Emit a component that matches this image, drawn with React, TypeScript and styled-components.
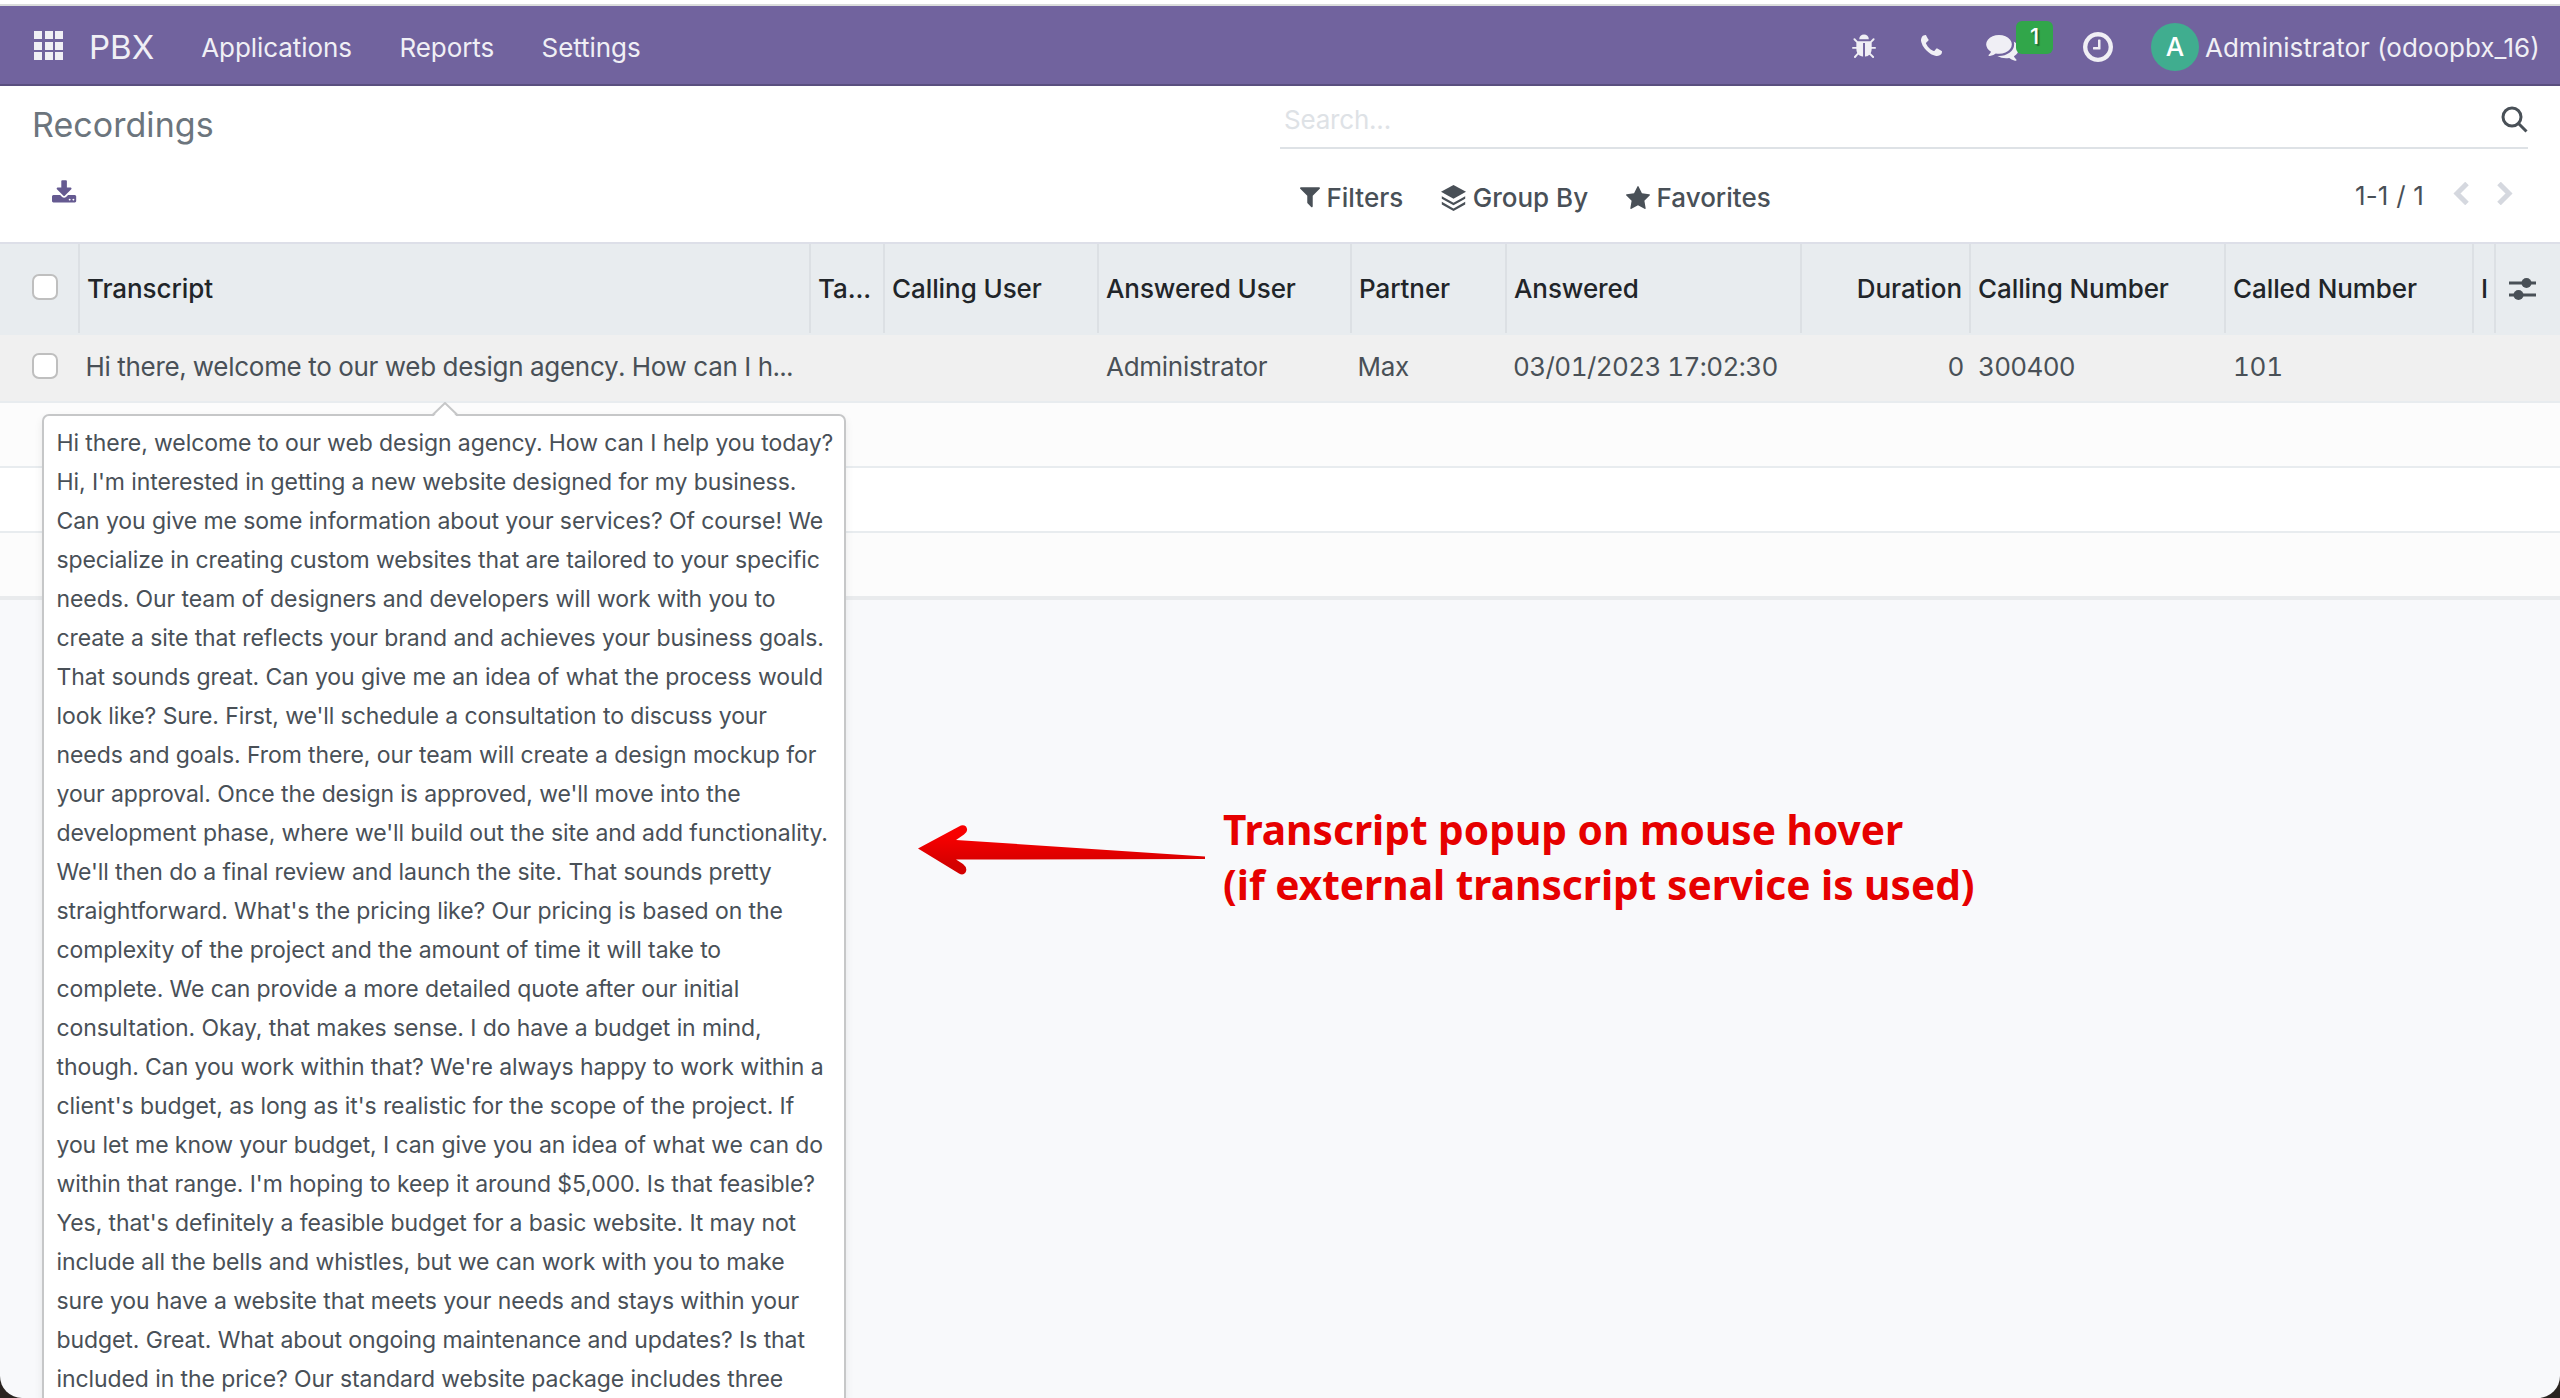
import React from 'react';
import styled, { createGlobalStyle } from 'styled-components';

const GlobalStyle = createGlobalStyle`
  * { box-sizing: border-box; }
  body {
    margin: 0;
    background: #2a2420;
    font-family: Inter, "Liberation Sans", sans-serif;
    font-size: 26px;
    color: #495057;
    -webkit-font-smoothing: antialiased;
  }
`;

const Window = styled.div`
  position: relative;
  display: flex;
  flex-direction: column;
  width: 2560px;
  height: 1398px;
  overflow: hidden;
  background: #f8f9fb;
  border-radius: 0 0 22px 22px;
`;

const WindowEdge = styled.div`
  flex: none;
  height: 6px;
  background: #fff;
  border-bottom: 2px solid #dadcdb;
`;

const Navbar = styled.nav`
  flex: none;
  display: flex;
  align-items: center;
  justify-content: space-between;
  height: 80px;
  padding: 1px 20px 0 34px;
  background: #71639e;
  border-bottom: 2px solid #5a4f7f;
  color: #f0eff5;
`;

const NavGroup = styled.div`
  display: flex;
  align-items: center;
`;

const AppsGrid = styled.span`
  display: grid;
  grid-template-columns: repeat(3, 8px);
  grid-auto-rows: 8px;
  gap: 2.5px;
  margin-right: 26px;

  i { background: #f0eff5; }
`;

const Brand = styled.span`
  font-size: 33px;
  line-height: 40px;
  margin: 2px 47px 0 0;
`;

const MenuItem = styled.a`
  margin: 3px 47.4px 0 0;
  letter-spacing: -0.06px;
`;

const Glyph = styled.svg<{ $w: number; $h: number; $gap?: number; $drop?: number }>`
  display: block;
  flex: none;
  width: ${p => p.$w}px;
  height: ${p => p.$h}px;
  margin-right: ${p => p.$gap ?? 0}px;
  margin-top: ${p => p.$drop ?? 0}px;
  overflow: visible;
  fill: currentColor;
`;

const Messages = styled.span`
  position: relative;
  margin: 5px 64px 0 0;
`;

const Badge = styled.span`
  position: absolute;
  left: 30px;
  top: -14px;
  width: 37px;
  height: 33px;
  border-radius: 6px;
  background: #31a64a;
  color: #fff;
  font-size: 22px;
  font-weight: 500;
  line-height: 31px;
  text-align: center;
  text-shadow: 2px 2px 1px rgba(0, 0, 0, 0.35);
`;

const Avatar = styled.span`
  width: 48px;
  height: 48px;
  margin: 2px 6px 0 0;
  border-radius: 50%;
  background: #40ad8f;
  color: #fff;
  font-size: 26px;
  font-weight: 500;
  line-height: 48px;
  text-align: center;
`;

const UserName = styled.span`
  width: 335px;
  margin-top: 3px;
  white-space: nowrap;
`;

const ControlPanel = styled.header`
  flex: none;
  display: grid;
  grid-template-columns: 1280px 1248px;
  grid-template-rows: 63px 93px;
  height: 158px;
  background: #fff;
  border-bottom: 2px solid #dddfe8;
`;

const Title = styled.h1`
  margin: 0;
  padding: 15px 0 0 32px;
  align-self: center;
  font-size: 34px;
  font-weight: 400;
  line-height: 40px;
  letter-spacing: 0.05px;
  color: #6c757d;
`;

const SearchBox = styled.div`
  display: flex;
  justify-content: space-between;
  padding: 19px 0 0 4px;
  border-bottom: 2px solid #dee2e6;
  line-height: 30px;
  color: #dee2e6;
  letter-spacing: -0.2px;
`;

const SearchGlyph = styled.svg`
  width: 27px;
  height: 27px;
  margin-top: 1px;
  fill: none;
  stroke: #495057;
  stroke-width: 3;
`;

const ExportButton = styled.div`
  padding: 31px 0 0 52px;
  color: #655a91;
`;

const SearchTools = styled.div`
  display: flex;
  align-items: center;
  justify-content: space-between;
  padding-left: 20px;
`;

const Menus = styled.div`
  display: flex;
  gap: 38px;
  font-weight: 500;
  padding-top: 4px;
`;

const MenuButton = styled.span`
  display: flex;
  align-items: center;
  gap: 6.5px;
  line-height: 30px;
`;

const Pager = styled.div`
  display: flex;
  align-items: center;
  padding-right: 15px;
  color: #495057;
  letter-spacing: 0.2px;
`;

const PagerArrow = styled.svg`
  width: 16px;
  height: 23px;
  margin: 0 0 5px 29px;
  fill: none;
  stroke: #d5d8df;
  stroke-width: 5;
  &:last-child { margin-left: 28px; }
`;

const columns = '80px 731px 74px 214px 253px 155px 295px 169px 255px 248px 22px 64px';

const HeaderRow = styled.div`
  flex: none;
  display: grid;
  grid-template-columns: ${columns};
  height: 91px;
  padding-bottom: 0;
  background: #e8ecef;
  border-bottom: 2px solid #e8ecef;
`;

const HeaderCell = styled.div<{ $end?: boolean }>`
  display: flex;
  align-items: center;
  justify-content: ${p => (p.$end ? 'flex-end' : 'flex-start')};
  padding: 0 ${p => (p.$end ? 7 : 0)}px 0 7px;
  border-right: 2px solid #dce0e4;
  overflow: hidden;
  white-space: nowrap;
  font-weight: 500;
  letter-spacing: -0.08px;
  color: #212529;
  &:last-child { border-right: 0; padding-left: 13px; color: #495057; }
`;

const DataRow = styled.div`
  flex: none;
  display: grid;
  grid-template-columns: ${columns};
  height: 68px;
  padding-bottom: 4px;
  background: #f0f0f0;
  border-bottom: 2px solid #e8ecef;
`;

const Cell = styled.div<{ $end?: boolean; $inset?: number; $tracking?: number }>`
  display: flex;
  align-items: center;
  justify-content: ${p => (p.$end ? 'flex-end' : 'flex-start')};
  padding: 0 7px 0 ${p => p.$inset ?? 7}px;
  white-space: nowrap;
  font-variant-numeric: tabular-nums;
  letter-spacing: ${p => p.$tracking ?? -0.28}px;
`;

const Checkbox = styled.span`
  width: 26px;
  height: 26px;
  margin: 0 0 3px 25px;
  border: 2px solid #bfbfbf;
  border-radius: 7px;
  background: #fff;
  ${Cell} & { margin: 0 0 0 25px; }
`;

const EmptyRow = styled.div<{ $striped?: boolean; $last?: boolean }>`
  flex: none;
  height: ${p => (p.$last ? 67 : 65)}px;
  background: ${p => (p.$striped ? '#fcfcfc' : '#fff')};
  border-bottom: ${p => (p.$last ? '4px solid #e9ebed' : '2px solid #e8ecef')};
`;

const Popover = styled.div`
  position: absolute;
  left: 42px;
  top: 414px;
  width: 804px;
  padding: 7.5px 12.5px;
  border: 2px solid #c6c7c8;
  border-radius: 7px;
  background: #fff;
  box-shadow: 0 4px 8px rgba(0, 0, 0, 0.08);
  font-size: 23px;
  line-height: 39px;
  letter-spacing: -0.09px;
  white-space: pre;
`;

const PopoverArrow = styled.svg`
  position: absolute;
  left: 387px;
  top: -14px;
  width: 28px;
  height: 15px;
`;

const Annotation = styled.div`
  position: absolute;
  left: 918px;
  top: 802px;
  display: flex;
  gap: 17px;
  font: 700 40.65px/55px "Noto Sans", "Open Sans", sans-serif;
  color: #e60000;
  white-space: pre;
`;

const AnnotationArrow = styled.svg`
  width: 288px;
  height: 52px;
  margin-top: 22px;
`;

const icons = {
  bug: 'M1632 960q0 26-19 45t-45 19h-224q0 171-67 290l208 209q19 19 19 45t-19 45q-18 19-45 19t-45-19l-198-197q-5 5-15 13t-42 28.5-65 36.5-82 29-97 13v-896h-128v896q-51 0-101.5-13.5t-87-33-66-39-43.5-32.5l-15-14-183 207q-20 21-48 21-24 0-43-16-19-18-20.5-44.5t15.5-46.5l202-227q-58-114-58-274h-224q-26 0-45-19t-19-45 19-45 45-19h224v-294l-173-173q-19-19-19-45t19-45 45-19 45 19l173 173h844l173-173q19-19 45-19t45 19 19 45-19 45l-173 173v294h224q26 0 45 19t19 45zm-480-576h-640q0-133 93.5-226.5t226.5-93.5 226.5 93.5 93.5 226.5z',
  phone: 'M1600 1240q0 27-10 70.5t-21 68.5q-21 50-122 106-94 51-186 51-27 0-53-3.5t-57.5-12.5-47-14.5-55.5-20.5-49-18q-98-35-175-83-127-79-264-216t-216-264q-48-77-83-175-3-9-18-49t-20.5-55.5-14.5-47-12.5-57.5-3.5-53q0-92 51-186 56-101 106-122 25-11 68.5-21t70.5-10q14 0 21 3 18 6 53 76 11 19 30 54t35 63.5 31 53.5q3 4 17.5 25t21.5 35.5 7 28.5q0 20-28.5 50t-62 55-62 53-28.5 46q0 9 5 22.5t8.5 20.5 14 24 11.5 19q76 137 174 235t235 174q2 1 19 11.5t24 14 20.5 8.5 22.5 5q18 0 46-28.5t53-62 55-62 50-28.5q14 0 28.5 7t35.5 21.5 25 17.5q25 15 53.5 31t63.5 35 54 30q70 35 76 53 3 7 3 21z',
  comments: 'M1408 768q0 139-94 257t-256.5 186.5-353.5 68.5q-86 0-176-16-124 88-278 128-36 9-86 16h-3q-11 0-20.5-8t-11.5-21q-1-3-1-6.5t.5-6.5 2-6l2.5-5 3.5-5.5 4-5 4.5-5 4-4.5q5-6 23-25t26-29.5 22.5-29 25-38.5 20.5-44q-124-72-195-177t-71-224q0-139 94-257t256.5-186.5 353.5-68.5 353.5 68.5 256.5 186.5 94 257zm384 256q0 120-71 224.5t-195 176.5q10 24 20.5 44t25 38.5 22.5 29 26 29.5 23 25q1 1 4 4.5t4.5 5 4 5 3.5 5.5l2.5 5 2 6 .5 6.5-1 6.5q-3 14-13 22t-22 7q-50-7-86-16-154-40-278-128-90 16-176 16-271 0-472-132 58 4 88 4 161 0 309-45t264-129q125-92 192-212t67-254q0-77-23-152 129 71 204 178t75 230z',
  clock: 'M1024 544v448q0 14-9 23t-23 9h-320q-14 0-23-9t-9-23v-64q0-14 9-23t23-9h224v-352q0-14 9-23t23-9h64q14 0 23 9t9 23zm416 352q0-148-73-273t-198-198-273-73-273 73-198 198-73 273 73 273 198 198 273 73 273-73 198-198 73-273zm224 0q0 209-103 385.5t-279.5 279.5-385.5 103-385.5-103-279.5-279.5-103-385.5 103-385.5 279.5-279.5 385.5-103 385.5 103 279.5 279.5 103 385.5z',
  download: 'M1344 1344q0-26-19-45t-45-19-45 19-19 45 19 45 45 19 45-19 19-45zm256 0q0-26-19-45t-45-19-45 19-19 45 19 45 45 19 45-19 19-45zm128-224v320q0 40-28 68t-68 28h-1472q-40 0-68-28t-28-68v-320q0-40 28-68t68-28h465l135 136q58 56 136 56t136-56l136-136h464q40 0 68 28t28 68zm-325-569q17 41-14 70l-448 448q-18 19-45 19t-45-19l-448-448q-31-29-14-70 17-39 59-39h256v-448q0-26 19-45t45-19h256q26 0 45 19t19 45v448h256q42 0 59 39z',
  filter: 'M1595 295q17 41-14 70l-493 493v742q0 42-39 59-13 5-25 5-27 0-45-19l-256-256q-19-19-19-45v-486l-493-493q-31-29-14-70 17-39 59-39h1280q42 0 59 39z',
  star: 'M1728 647q0 22-26 48l-363 354 86 500q1 7 1 20 0 21-10.5 35.5t-30.5 14.5q-19 0-40-12l-449-236-449 236q-22 12-40 12-21 0-31.5-14.5t-10.5-35.5q0-6 2-20l86-500-364-354q-25-27-25-48 0-37 56-46l502-73 225-455q19-41 49-41t49 41l225 455 502 73q56 9 56 46z',
};

const transcript = [
  'Hi there, welcome to our web design agency. How can I help you today?',
  "Hi, I'm interested in getting a new website designed for my business.",
  'Can you give me some information about your services? Of course! We',
  'specialize in creating custom websites that are tailored to your specific',
  'needs. Our team of designers and developers will work with you to',
  'create a site that reflects your brand and achieves your business goals.',
  'That sounds great. Can you give me an idea of what the process would',
  "look like? Sure. First, we'll schedule a consultation to discuss your",
  'needs and goals. From there, our team will create a design mockup for',
  "your approval. Once the design is approved, we'll move into the",
  "development phase, where we'll build out the site and add functionality.",
  "We'll then do a final review and launch the site. That sounds pretty",
  "straightforward. What's the pricing like? Our pricing is based on the",
  'complexity of the project and the amount of time it will take to',
  'complete. We can provide a more detailed quote after our initial',
  'consultation. Okay, that makes sense. I do have a budget in mind,',
  "though. Can you work within that? We're always happy to work within a",
  "client's budget, as long as it's realistic for the scope of the project. If",
  'you let me know your budget, I can give you an idea of what we can do',
  "within that range. I'm hoping to keep it around $5,000. Is that feasible?",
  "Yes, that's definitely a feasible budget for a basic website. It may not",
  'include all the bells and whistles, but we can work with you to make',
  'sure you have a website that meets your needs and stays within your',
  'budget. Great. What about ongoing maintenance and updates? Is that',
  'included in the price? Our standard website package includes three',
];

export default function App() {
  return (
    <>
      <GlobalStyle />
      <Window>
        <WindowEdge />
        <Navbar>
          <NavGroup>
            <AppsGrid>{Array.from({ length: 9 }, (_, i) => <i key={i} />)}</AppsGrid>
            <Brand>PBX</Brand>
            <MenuItem>Applications</MenuItem>
            <MenuItem>Reports</MenuItem>
            <MenuItem>Settings</MenuItem>
          </NavGroup>
          <NavGroup>
            <Glyph $w={23} $h={24} $gap={45} $drop={1} viewBox="96 64 1536 1540"><path d={icons.bug} /></Glyph>
            <Glyph $w={21} $h={21} $gap={44} viewBox="192 128 1408 1408"><path d={icons.phone} /></Glyph>
            <Messages>
              <Glyph $w={33} $h={27} viewBox="0 256 1792 1480"><path d={icons.comments} /></Glyph>
              <Badge>1</Badge>
            </Messages>
            <Glyph $w={30} $h={30} $gap={38} $drop={2} viewBox="128 128 1536 1536"><path d={icons.clock} /></Glyph>
            <Avatar>A</Avatar>
            <UserName>Administrator (odoopbx_16)</UserName>
          </NavGroup>
        </Navbar>

        <ControlPanel>
          <Title>Recordings</Title>
          <SearchBox>
            <span>Search...</span>
            <SearchGlyph viewBox="0 0 27 27">
              <circle cx="11" cy="11" r="9" />
              <path d="M17 17L25.5 25.5" />
            </SearchGlyph>
          </SearchBox>
          <ExportButton>
            <Glyph $w={24.2} $h={22.6} viewBox="64 0 1664 1536"><path d={icons.download} /></Glyph>
          </ExportButton>
          <SearchTools>
            <Menus>
              <MenuButton>
                <Glyph $w={20} $h={20.5} viewBox="192 256 1408 1408"><path d={icons.filter} /></Glyph>
                Filters
              </MenuButton>
              <MenuButton>
                <Glyph $w={25} $h={26} viewBox="0 0 25 26">
                  <path d="M12.5 0L25 6.8 12.5 13.8 0 6.8z" />
                  <path d="M.8 11.2L12.5 17.8 24.2 11.2V13.8L12.5 20.2 .8 13.8z" />
                  <path d="M.8 16.8L12.5 23.4 24.2 16.8V19.4L12.5 26 .8 19.4z" />
                </Glyph>
                Group By
              </MenuButton>
              <MenuButton>
                <Glyph $w={24} $h={23} viewBox="64 32 1664 1587"><path d={icons.star} /></Glyph>
                Favorites
              </MenuButton>
            </Menus>
            <Pager>
              <span>1-1 / 1</span>
              <PagerArrow viewBox="0 0 16 23"><path d="M14 1.5L4 11.5 14 21.5" /></PagerArrow>
              <PagerArrow viewBox="0 0 16 23"><path d="M2 1.5L12 11.5 2 21.5" /></PagerArrow>
            </Pager>
          </SearchTools>
        </ControlPanel>

        <HeaderRow>
          <HeaderCell><Checkbox /></HeaderCell>
          <HeaderCell>Transcript</HeaderCell>
          <HeaderCell>Ta...</HeaderCell>
          <HeaderCell>Calling User</HeaderCell>
          <HeaderCell>Answered User</HeaderCell>
          <HeaderCell>Partner</HeaderCell>
          <HeaderCell>Answered</HeaderCell>
          <HeaderCell $end>Duration</HeaderCell>
          <HeaderCell>Calling Number</HeaderCell>
          <HeaderCell>Called Number</HeaderCell>
          <HeaderCell>I</HeaderCell>
          <HeaderCell>
            <Glyph $w={27} $h={22} viewBox="0 0 27 22">
              <path d="M0 3.5h27v3H0zM0 15.5h27v3H0z" />
              <circle cx="17.5" cy="5" r="5" />
              <circle cx="9.5" cy="17" r="5" />
            </Glyph>
          </HeaderCell>
        </HeaderRow>
        <DataRow>
          <Cell><Checkbox /></Cell>
          <Cell $inset={5.5}>Hi there, welcome to our web design agency. How can I h...</Cell>
          <Cell />
          <Cell />
          <Cell>Administrator</Cell>
          <Cell $inset={5.5}>Max</Cell>
          <Cell $inset={6} $tracking={-0.58}>03/01/2023 17:02:30</Cell>
          <Cell $end>0</Cell>
          <Cell $tracking={-0.7}>300400</Cell>
          <Cell>101</Cell>
        </DataRow>
        <EmptyRow $striped />
        <EmptyRow />
        <EmptyRow $striped $last />

        <Popover>
          <PopoverArrow viewBox="0 0 28 15">
            <path d="M2 15L14 1.5 26 15z" fill="#fff" />
            <path d="M1 13.5L14 1 27 13.5" fill="none" stroke="#c6c7c8" strokeWidth="2" />
          </PopoverArrow>
          {transcript.join('\n')}
        </Popover>

        <Annotation>
          <AnnotationArrow viewBox="0 0 288 52">
            <defs>
              <linearGradient id="arrowRed" x1="0" y1="0" x2="0" y2="1">
                <stop offset="0.2" stopColor="#f80000" />
                <stop offset="0.8" stopColor="#d40000" />
              </linearGradient>
            </defs>
            <path
              fill="url(#arrowRed)"
              d="M0 24.5L41 2.5Q45 0 48 2.5Q51 7 46 10.5L38 16L287 32.5V35L38 35.5L45 40Q50 44 47.500 48.500Q45 52 41 49.500z"
            />
          </AnnotationArrow>
          <span>{'Transcript popup on mouse hover\n(if external transcript service is used)'}</span>
        </Annotation>
      </Window>
    </>
  );
}
